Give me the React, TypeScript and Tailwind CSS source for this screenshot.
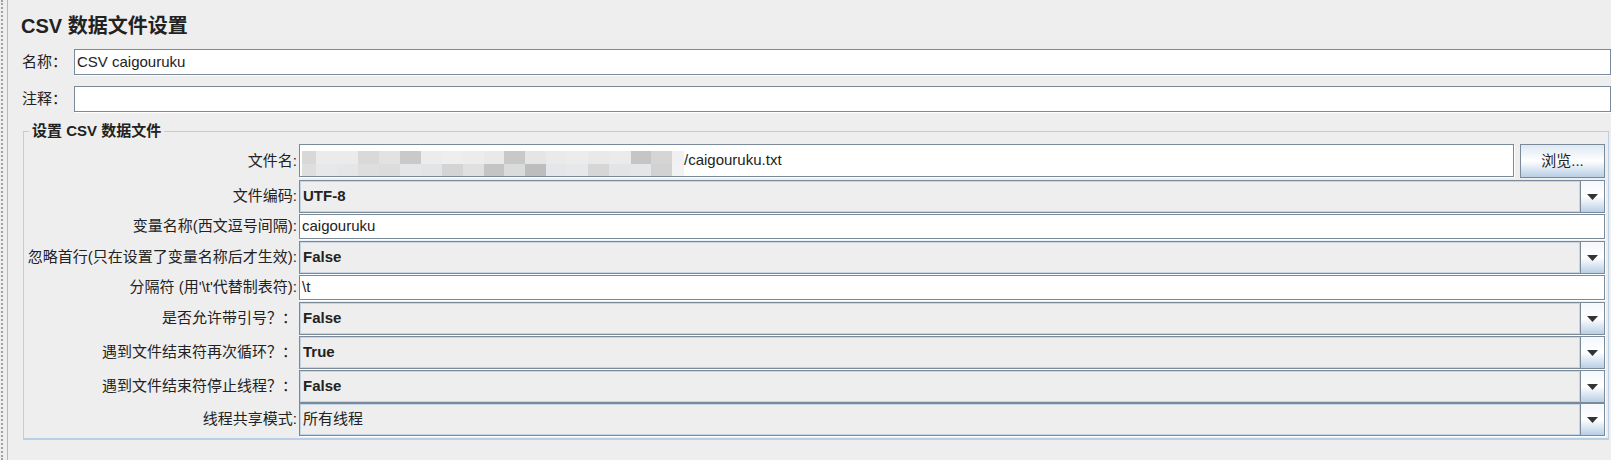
const FONT = "font-['Liberation_Sans','Noto_Sans_CJK_SC',sans-serif]"

// blurred path in the file name field, two rows of mosaic cells
const MOSAIC_TOP = [
  'w-[14px] bg-[#d8d8d8]', 'w-[21px] bg-[#ebebeb]', 'w-[21px] bg-[#ebebeb]', 'w-[21px] bg-[#d9d9d9]',
  'w-[21px] bg-[#e2e2e2]', 'w-[21px] bg-[#c9c9c9]', 'w-[21px] bg-[#ececec]', 'w-[21px] bg-[#eeeeee]',
  'w-[21px] bg-[#ececec]', 'w-[20px] bg-[#e9e9e9]', 'w-[21px] bg-[#c8c8c8]', 'w-[21px] bg-[#e5e5e5]',
  'w-[20px] bg-[#eaeaea]', 'w-[22px] bg-[#ececec]', 'w-[21px] bg-[#e9e9e9]', 'w-[22px] bg-[#ebebeb]',
  'w-[20px] bg-[#c5c5c5]', 'w-[21px] bg-[#d5d5d5]', 'w-[12px] bg-[#f0f0f0]',
]
const MOSAIC_BOTTOM = [
  'w-[14px] bg-[#dedede]', 'w-[21px] bg-[#e6e8ea]', 'w-[21px] bg-[#e4e6e8]', 'w-[21px] bg-[#dedede]',
  'w-[21px] bg-[#dcdcdc]', 'w-[21px] bg-[#e4e6e8]', 'w-[21px] bg-[#e2e4e6]', 'w-[21px] bg-[#d4d4d4]',
  'w-[21px] bg-[#e0e0e0]', 'w-[20px] bg-[#c4c4c4]', 'w-[21px] bg-[#dadcdc]', 'w-[21px] bg-[#bdbdbd]',
  'w-[20px] bg-[#e4e6ea]', 'w-[22px] bg-[#e6e8ea]', 'w-[21px] bg-[#d6d6d6]', 'w-[22px] bg-[#e2e4e6]',
  'w-[20px] bg-[#e4e6e8]', 'w-[21px] bg-[#d2d2d2]', 'w-[12px] bg-[#f2f2f2]',
]

type Row = {
  label: string
  kind: 'file' | 'text' | 'combo'
  value: string
  bold?: boolean
  cls: string
}

const ROWS: Row[] = [
  { label: '文件名:', kind: 'file', value: '/caigouruku.txt', cls: 'h-[34px]' },
  { label: '文件编码:', kind: 'combo', value: 'UTF-8', bold: true, cls: 'h-[33px] mt-[2px]' },
  { label: '变量名称(西文逗号间隔):', kind: 'text', value: 'caigouruku', cls: 'h-[25px] mt-[1px]' },
  { label: '忽略首行(只在设置了变量名称后才生效):', kind: 'combo', value: 'False', bold: true, cls: 'h-[33px] mt-[2px]' },
  { label: "分隔符 (用'\\t'代替制表符):", kind: 'text', value: '\\t', cls: 'h-[25px] mt-[1px]' },
  { label: '是否允许带引号？：', kind: 'combo', value: 'False', bold: true, cls: 'h-[33px] mt-[2px]' },
  { label: '遇到文件结束符再次循环？：', kind: 'combo', value: 'True', bold: true, cls: 'h-[33px] mt-[1px]' },
  { label: '遇到文件结束符停止线程？：', kind: 'combo', value: 'False', bold: true, cls: 'h-[33px] mt-[1px]' },
  { label: '线程共享模式:', kind: 'combo', value: '所有线程', cls: 'h-[33px]' },
]

function TextBox({ children, className = '' }: { children?: React.ReactNode; className?: string }) {
  return (
    <div className={`flex items-center bg-white border border-[#7a8a99] shadow-[1px_1px_0_#ffffff] pl-[2px] ${className}`}>
      {children}
    </div>
  )
}

function Arrow() {
  return (
    <svg width="11" height="6" viewBox="0 0 11 6">
      <polygon points="0,0 11,0 5.5,6" fill="#333333" />
    </svg>
  )
}

function Combo({ value, bold }: { value: string; bold?: boolean }) {
  return (
    <div className="flex h-full border border-[#7a8a99] shadow-[1px_1px_0_#ffffff]">
      <div className={`flex-1 flex items-center border border-[#c4d5e6] bg-[#eeeeee] pl-[2px] ${bold ? 'font-bold' : ''}`}>
        {value}
      </div>
      <div className="w-[24px] flex items-center justify-center border-l border-[#7a8a99] bg-gradient-to-b from-[#f4f8fc] via-white to-[#b8cfe5]">
        <Arrow />
      </div>
    </div>
  )
}

function FileField({ value }: { value: string }) {
  return (
    <div className="flex h-full gap-[6px]">
      <TextBox className="flex-1 h-[33px]">
        <div className="flex flex-col mt-[5px]">
          <div className="flex h-[13px]">
            {MOSAIC_TOP.map((c, i) => <div key={i} className={c} />)}
          </div>
          <div className="flex h-[12px]">
            {MOSAIC_BOTTOM.map((c, i) => <div key={i} className={c} />)}
          </div>
        </div>
        <span>{value}</span>
      </TextBox>
      <button className="w-[85px] h-[34px] border border-[#7a8a99] bg-gradient-to-b from-[#dde8f3] via-white to-[#b8cfe5] text-[#222]">
        浏览...
      </button>
    </div>
  )
}

export default function App() {
  return (
    <div className={`h-[460px] w-full flex bg-[#eeeeee] text-[15px] text-[#222222] ${FONT}`}>
      <div className="w-[8px] h-full flex shrink-0">
        <div className="ml-[1px] border-l-2 border-dotted border-[#a0a0a0]" />
        <div className="ml-auto w-px bg-[#b8b8b8]" />
      </div>

      <div className="flex-1 flex flex-col pl-[13px] pt-[12px]">
        <div className="h-[28px] leading-[28px] text-[20px] font-bold">CSV 数据文件设置</div>

        <div className="flex h-[26px] mt-[9px]">
          <div className="w-[53px] pl-[1px] flex items-center">名称：</div>
          <TextBox className="flex-1">CSV caigouruku</TextBox>
        </div>
        <div className="flex h-[26px] mt-[11px]">
          <div className="w-[53px] pl-[1px] flex items-center">注释：</div>
          <TextBox className="flex-1" />
        </div>

        <fieldset className="mt-[10px] ml-[2px] mr-[2px] border border-b-2 border-[#b8cfe5] pr-[3px] pb-[2px]">
          <legend className="ml-[5px] px-[3px] leading-[18px] font-bold">设置 CSV 数据文件</legend>
          <div className="flex flex-col pt-[4px]">
            {ROWS.map((r, i) => (
              <div key={i} className={`grid grid-cols-[275px_1fr] ${r.cls}`}>
                <div className="flex items-center justify-end pr-[2px] whitespace-nowrap">{r.label}</div>
                {r.kind === 'file' && <FileField value={r.value} />}
                {r.kind === 'text' && <TextBox className="h-full">{r.value}</TextBox>}
                {r.kind === 'combo' && <Combo value={r.value} bold={r.bold} />}
              </div>
            ))}
          </div>
        </fieldset>
      </div>
    </div>
  )
}
